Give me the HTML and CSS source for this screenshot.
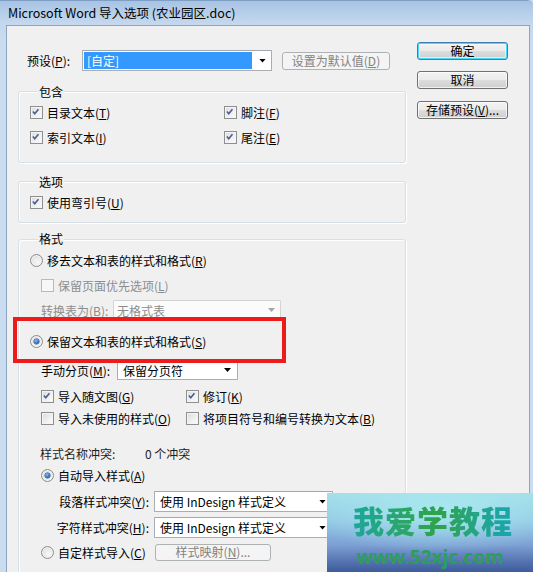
FILE: index.html
```html
<!DOCTYPE html>
<html lang="zh-CN">
<head>
<meta charset="utf-8">
<title>Microsoft Word 导入选项</title>
<link rel="stylesheet" href="styles.css">
</head>
<body>
<div class="window">
  <div class="titlebar"><span class="title">Microsoft Word 导入选项 (农业园区.doc)</span></div>
  <div class="client">
    <div class="main">
      <div class="preset-row">
        <span class="preset-lbl">预设(<u>P</u>):</span>
        <div class="combo preset-combo"><span class="sel">[自定]</span><span class="arrow"></span></div>
        <div class="btn disabled set-default">设置为默认值(<u>D</u>)</div>
      </div>

      <div class="group g-include">
        <div class="gtitle">包含</div>
        <div class="grid-include">
          <div class="item"><span class="cb"><svg class="chk" viewBox="0 0 13 13"><path d="M3.2 6.4 L5.4 8.9 L9.8 3.6"/></svg></span><span>目录文本(<u>T</u>)</span></div>
          <div class="item"><span class="cb"><svg class="chk" viewBox="0 0 13 13"><path d="M3.2 6.4 L5.4 8.9 L9.8 3.6"/></svg></span><span>脚注(<u>F</u>)</span></div>
          <div class="item"><span class="cb"><svg class="chk" viewBox="0 0 13 13"><path d="M3.2 6.4 L5.4 8.9 L9.8 3.6"/></svg></span><span>索引文本(<u>I</u>)</span></div>
          <div class="item"><span class="cb"><svg class="chk" viewBox="0 0 13 13"><path d="M3.2 6.4 L5.4 8.9 L9.8 3.6"/></svg></span><span>尾注(<u>E</u>)</span></div>
        </div>
      </div>

      <div class="group g-options">
        <div class="gtitle">选项</div>
        <div class="item row-opt"><span class="cb"><svg class="chk" viewBox="0 0 13 13"><path d="M3.2 6.4 L5.4 8.9 L9.8 3.6"/></svg></span><span>使用弯引号(<u>U</u>)</span></div>
      </div>

      <div class="group g-format">
        <div class="gtitle">格式</div>
        <div class="item r1"><span class="rb"></span><span>移去文本和表的样式和格式(<u>R</u>)</span></div>
        <div class="item r2 dim"><span class="cb off"></span><span>保留页面优先选项(<u>L</u>)</span></div>
        <div class="row r3 dim">
          <span class="lbl-conv">转换表为(B):</span>
          <div class="combo combo-dis conv-combo"><span>无格式表</span><span class="arrow grey"></span></div>
        </div>
        <div class="item r4"><span class="rb on"></span><span>保留文本和表的样式和格式(<u>S</u>)</span></div>
        <div class="row r5">
          <span class="lbl-break">手动分页(<u>M</u>):</span>
          <div class="combo break-combo"><span>保留分页符</span><span class="arrow"></span></div>
        </div>
        <div class="grid-fmt r6">
          <div class="item"><span class="cb"><svg class="chk" viewBox="0 0 13 13"><path d="M3.2 6.4 L5.4 8.9 L9.8 3.6"/></svg></span><span>导入随文图(<u>G</u>)</span></div>
          <div class="item"><span class="cb"><svg class="chk" viewBox="0 0 13 13"><path d="M3.2 6.4 L5.4 8.9 L9.8 3.6"/></svg></span><span>修订(<u>K</u>)</span></div>
        </div>
        <div class="grid-fmt r7">
          <div class="item"><span class="cb off"></span><span>导入未使用的样式(<u>O</u>)</span></div>
          <div class="item"><span class="cb off"></span><span>将项目符号和编号转换为文本(<u>B</u>)</span></div>
        </div>
        <div class="row r8">
          <span class="lbl-conflict">样式名称冲突:</span>
          <span>0 个冲突</span>
        </div>
        <div class="item r9"><span class="rb on"></span><span>自动导入样式(<u>A</u>)</span></div>
        <div class="row r10">
          <span class="lbl-style">段落样式冲突(<u>Y</u>):</span>
          <div class="combo style-combo"><span>使用 InDesign 样式定义</span><span class="arrow"></span></div>
        </div>
        <div class="row r11">
          <span class="lbl-style">字符样式冲突(<u>H</u>):</span>
          <div class="combo style-combo"><span>使用 InDesign 样式定义</span><span class="arrow"></span></div>
        </div>
        <div class="row r12">
          <div class="item"><span class="rb"></span><span>自定样式导入(<u>C</u>)</span></div>
          <div class="btn disabled map-btn">样式映射(<u>N</u>)...</div>
        </div>
      </div>
    </div>

    <div class="side">
      <div class="btn default">确定</div>
      <div class="btn cancel">取消</div>
      <div class="btn save">存储预设(<u>V</u>)...</div>
    </div>
  </div>

  <div class="highlight"></div>
  <div class="watermark">
    <div class="wm-title">我爱学教程</div>
    <div class="wm-url">www.52xjc.com</div>
  </div>
</div>
</body>
</html>
```

FILE: styles.css
```css
* { box-sizing: border-box; }
html, body { margin: 0; padding: 0; }
body {
  width: 533px;
  height: 572px;
  overflow: hidden;
  font-family: "Noto Sans CJK SC", "Noto Sans", sans-serif;
  font-size: 12px;
  color: #000;
  background: #c6d9ee;
}
u { text-decoration: underline; text-underline-offset: 1px; }

.window {
  position: relative;
  width: 533px;
  height: 572px;
  overflow: hidden;
  background: linear-gradient(#bcd2ea, #c9dcf0 40px, #c9dcf0);
  border-top: 1px solid #7e9ec4;
  border-top-right-radius: 6px;
}

.titlebar {
  height: 24px;
  display: flex;
  align-items: center;
  padding-left: 8px;
  background: linear-gradient(#a7c3e4, #bad1ea 60%, #c6d9ee);
}
.title { font-size: 12.5px; line-height: 16px; color: #000; }

.client {
  display: flex;
  margin-left: 6px;
  width: 524px;
  height: 560px;
  background: #f0f0f0;
  border: 1px solid #8ba5c3;
  border-bottom: none;
}

.main {
  width: 399px;
  padding: 24px 0 0 11px;
}
.side {
  margin-left: 11px;
  padding-top: 16px;
  display: flex;
  flex-direction: column;
}

/* buttons */
.btn {
  display: flex;
  align-items: center;
  justify-content: center;
  height: 18px;
  border: 1px solid #707070;
  border-radius: 3px;
  background: linear-gradient(#f2f2f2, #ebebeb 50%, #dddddd 50%, #cfcfcf);
  line-height: 14px;
  white-space: nowrap;
  box-shadow: inset 0 0 0 1px rgba(255,255,255,0.7);
}
.side .btn { width: 91px; }
.btn.default {
  border-color: #3c7fb1;
  box-shadow: inset 0 0 0 1px #48d8fb, inset 0 0 0 2px rgba(255,255,255,0.5);
}
.btn.cancel { margin-top: 11px; }
.btn.save { margin-top: 12px; }
.btn.disabled {
  border-color: #adb2b5;
  background: #f4f4f4;
  color: #838383;
  box-shadow: none;
}

/* preset row */
.preset-row {
  display: flex;
  align-items: center;
  height: 21px;
}
.preset-lbl { width: 64px; padding-left: 9px; white-space: nowrap; }
.set-default { width: 108px; margin-left: 10px; }

.combo {
  display: flex;
  align-items: center;
  justify-content: space-between;
  background: #fff;
  border: 1px solid #abadb3;
  border-top-color: #a3a7ae;
  border-radius: 1px;
  white-space: nowrap;
}
.arrow {
  width: 7px;
  height: 4px;
  background: #000;
  clip-path: polygon(0 0, 100% 0, 50% 100%);
}
.arrow.grey { background: #a6a6a6; }

.preset-combo {
  width: 190px;
  height: 21px;
  padding: 1px 5px 1px 1px;
}
.preset-combo .sel {
  width: 168px;
  height: 17px;
  background: #3399ff;
  color: #fff;
  padding-left: 3px;
  line-height: 17px;
}

/* group boxes */
.group {
  width: 388px;
  border: 1px solid #d5dfe5;
  border-radius: 3px;
  box-shadow: inset 1px 1px 0 #fff, 1px 1px 0 #fff;
}
.gtitle {
  width: max-content;
  height: 16px;
  line-height: 16px;
  margin: -9px 0 0 8px;
  padding: 0 1px;
  background: #f0f0f0;
}
.g-include { margin-top: 20px; padding: 1px 0 12px 11px; }
.g-options { margin-top: 18px; padding: 1px 0 7px 11px; }
.g-format { margin-top: 16px; padding: 0 0 40px 11px; }

.grid-include {
  display: grid;
  grid-template-columns: 194px 1fr;
  grid-auto-rows: 25px;
}
.row-opt { height: 25px; }

.item {
  display: flex;
  align-items: center;
  gap: 4px;
  white-space: nowrap;
}
.row {
  display: flex;
  align-items: center;
  white-space: nowrap;
}

/* checkbox */
.cb {
  flex: none;
  width: 13px;
  height: 13px;
  border: 1px solid #8f8f8f;
  background: linear-gradient(135deg, #dcdcdc, #f4f4f4 70%, #fbfbfb);
  box-shadow: inset 0 0 0 1px #f4f4f4;
  position: relative;
}
.chk {
  display: block;
  width: 11px;
  height: 11px;
  margin: 0;
}
.chk path {
  fill: none;
  stroke: #4a5e91;
  stroke-width: 1.9;
  transform: translate(-1px, -1px);
}
.dim { color: #8d8d8d; }
.dim .cb {
  border-color: #b9b9b9;
  background: #f7f7f7;
  box-shadow: none;
}

/* radio */
.rb {
  flex: none;
  width: 13px;
  height: 13px;
  border-radius: 50%;
  border: 1px solid #8d8d8d;
  background: radial-gradient(circle at 60% 65%, #f8f8f8 0, #e8e8e8 50%, #cfcfcf 100%);
  box-shadow: inset 0 0 0 1px #f2f2f2;
  display: flex;
  align-items: center;
  justify-content: center;
}
.rb.on::after {
  content: "";
  width: 5px;
  height: 5px;
  border-radius: 50%;
  background: radial-gradient(circle at 40% 35%, #8fc2f2 0, #2b6ec4 55%, #17479a 100%);
  box-shadow: 0 0 0 0.5px #1c4a8c;
}

/* format group rows */
.r1 { height: 26px; }
.r2 { height: 24px; padding-left: 11px; }
.r3 { height: 26px; padding-left: 11px; }
.lbl-conv { width: 72px; }
.combo-dis {
  border-color: #d4d4d4;
  background: #fbfbfb;
  color: #8d8d8d;
}
.conv-combo { width: 168px; height: 20px; padding: 0 5px 0 3px; }
.r4 { height: 22px; margin-top: 7px; }
.r5 { height: 20px; margin-top: 8px; padding-left: 11px; }
.lbl-break { width: 76px; }
.break-combo { width: 121px; height: 20px; padding: 0 6px 0 5px; }
.grid-fmt {
  display: grid;
  grid-template-columns: 145px 1fr;
  padding-left: 11px;
}
.r6 { height: 24px; margin-top: 4px; }
.r7 { height: 20px; }
.r8 { height: 20px; margin-top: 15px; padding-left: 10px; color: #1e1e1e; }
.lbl-conflict { width: 105px; }
.r9 { height: 20px; margin-top: 2px; padding-left: 11px; }
.r10 { height: 21px; margin-top: 6px; padding-left: 11px; }
.r11 { height: 21px; margin-top: 5px; padding-left: 11px; }
.lbl-style { width: 108px; text-align: right; margin-right: 5px; }
.style-combo { width: 179px; height: 21px; padding: 0 6px 0 5px; }
.r12 { height: 20px; margin-top: 4px; padding-left: 11px; }
.r12 .item { width: 114px; }
.map-btn { width: 116px; height: 17px; }

/* overlays */
.highlight {
  position: absolute;
  left: 13px;
  top: 316px;
  width: 273px;
  height: 46px;
  border: 4px solid #ee1b1b;
}
.watermark {
  position: absolute;
  left: 327px;
  top: 492px;
  width: 206px;
  height: 80px;
  background:
    radial-gradient(ellipse 70% 55% at 55% 20%, rgba(170,235,240,0.9), rgba(170,235,240,0) 100%),
    linear-gradient(#a3dde9 0%, #93c6e4 35%, #7c9fd4 65%, #4d6aa9 90%, #3e5a98 100%);
  display: flex;
  flex-direction: column;
  align-items: center;
  font-family: "Noto Sans CJK SC", sans-serif;
}
.wm-title {
  margin-top: 9px;
  font-size: 31px;
  font-weight: 900;
  line-height: 36px;
  letter-spacing: 1px;
  padding-left: 6px;
  background: linear-gradient(90deg, #1ba7a0, #2aa766 35%, #2fa24a 55%, #23a58a 80%, #19a5b0);
  -webkit-background-clip: text;
  background-clip: text;
  color: transparent;
}
.wm-url {
  margin-top: 8px;
  font-family: "Noto Sans", sans-serif;
  font-size: 19px;
  font-weight: 700;
  line-height: 22px;
  color: #2b9f5a;
}
```
